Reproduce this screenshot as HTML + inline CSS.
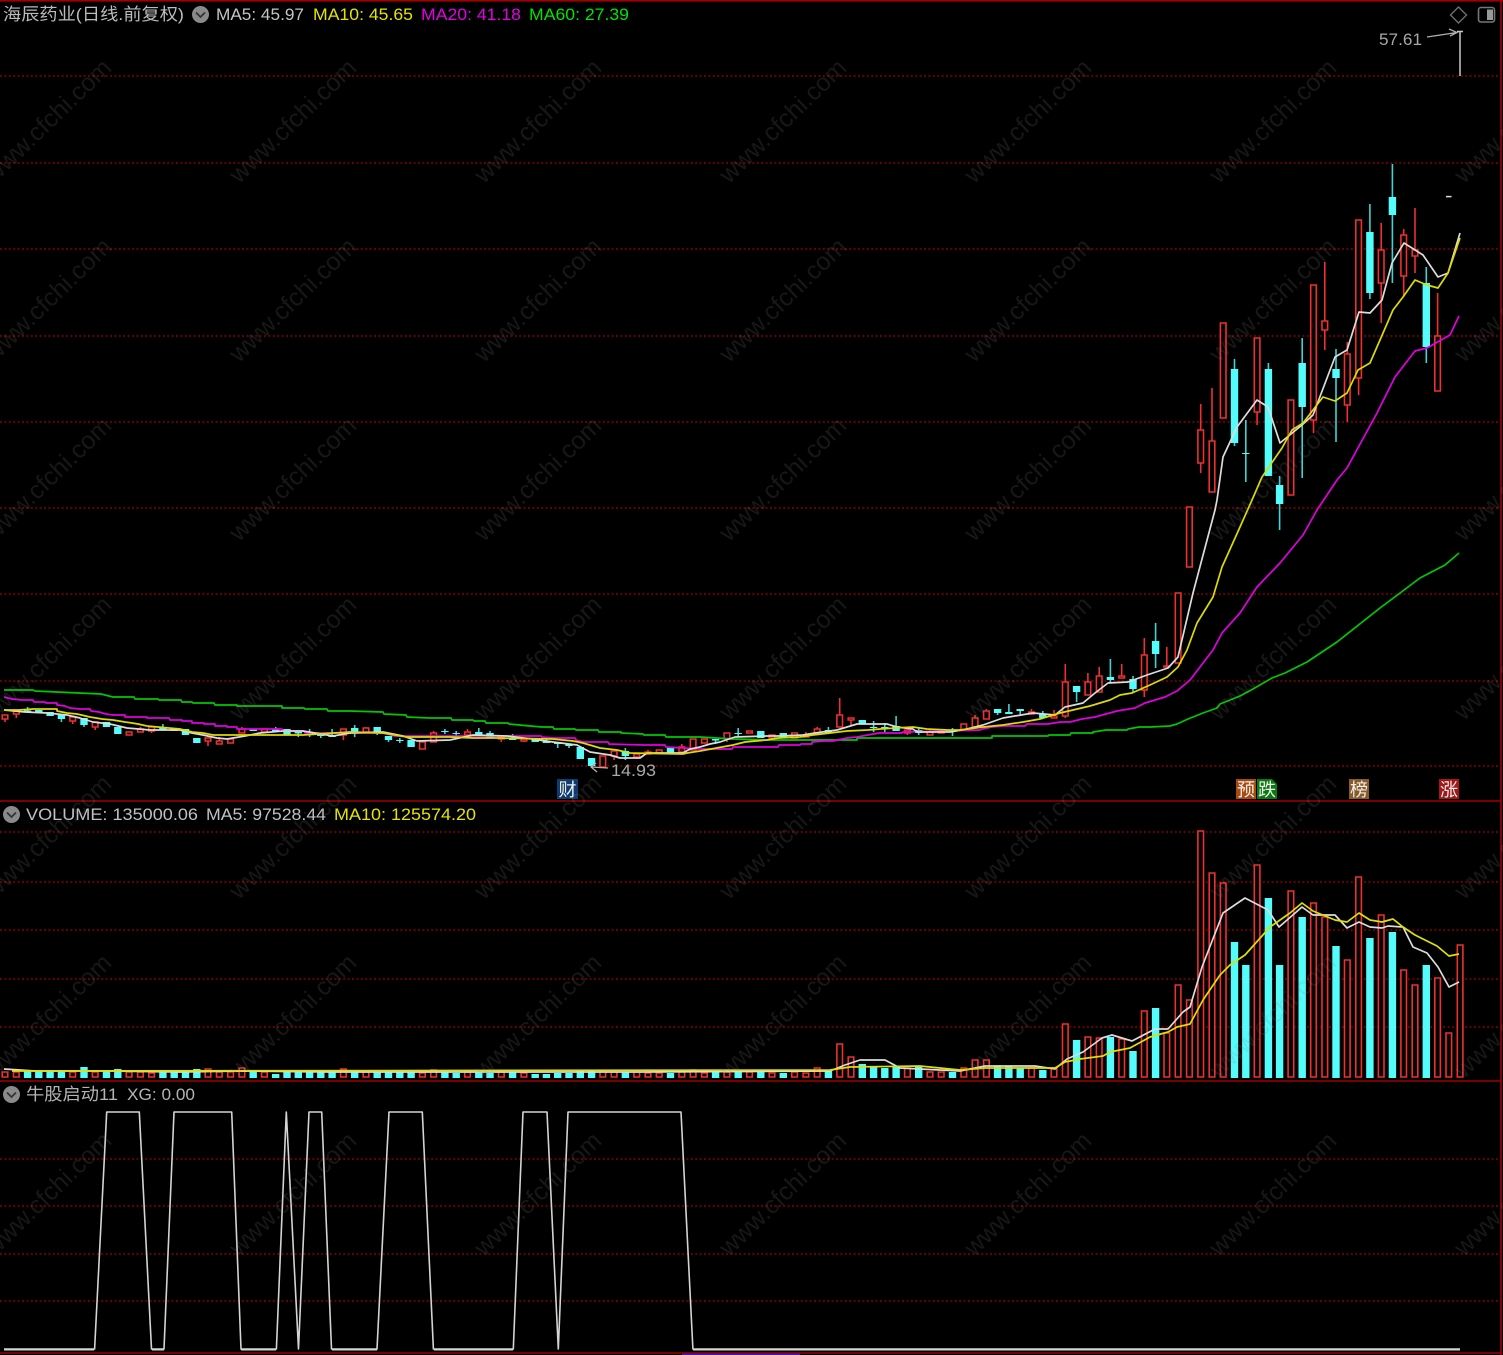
<!DOCTYPE html>
<html lang="zh">
<head>
<meta charset="utf-8">
<title>海辰药业</title>
<style>
html,body{margin:0;padding:0;background:#000;width:1503px;height:1355px;overflow:hidden}
svg{display:block;position:absolute;left:0;top:0}
text{font-family:"Liberation Sans","Noto Sans CJK SC",sans-serif}
.g{stroke:#860000;stroke-width:1.5;stroke-dasharray:2 2.4;fill:none}
.m{fill:none;stroke-width:1.7;stroke-linejoin:round}
.h{font-size:17px}
.w{font-size:25px;fill:#8a8a8a;fill-opacity:.17;text-anchor:middle}
.t{font-size:18px;fill:#eee;text-anchor:middle}
</style>
</head>
<body>
<svg width="1503" height="1355" viewBox="0 0 1503 1355" xmlns="http://www.w3.org/2000/svg">
<rect width="1503" height="1355" fill="#000"/>

<path class="g" d="M0 76H1500M0 163H1500M0 249H1500M0 336H1500M0 422H1500M0 508H1500M0 594H1500M0 681H1500M0 766H1500M0 832H1500M0 882H1500M0 930H1500M0 979H1500M0 1027H1500M0 1159H1500M0 1206H1500M0 1254H1500M0 1301H1500"/>

<path fill="none" stroke="#a00000" stroke-width="1.6" d="M0 .8H1503M0 801H1501M0 1081H1501M0 1353H1501M1501 0V1355"/>
<path fill="none" stroke="#3020c0" stroke-width="1.4" d="M682 1354.4H800"/>

<!-- Candles: red wicks -->
<path fill="none" stroke="#ee3030" stroke-width="1.6" d="M5 719V722M16.3 714V718M72.7 721V724M95.2 727V730M140.4 727V729M151.6 731V733M208 741V746M219.3 737V741M241.9 727V729M343.4 735V740M366 727V728M433.6 731V733M467.5 729V732M501.3 739V742M523.9 741V742M614.1 756V760M648 750V752M681.8 744V747M726.9 739V742M805.9 732V735M817.2 727V729M839.7 698V715M851 720V725M907.4 727V735M930 730V732M975.1 715V718M986.4 709V711M1031.5 709V712M1054 710V716M1065.3 664V682M1065.3 716V718M1087.9 673V682M1099.2 667V676M1121.7 664V676M1144.3 638V655M1144.3 690V697M1166.8 647V666M1200.7 404V430M1200.7 463V473M1212 388V441M1257.1 412V425M1313.5 420V433M1324.8 262V321M1324.8 330V350M1347.3 342V354M1347.3 405V422M1358.6 378V395M1381.2 223V250M1381.2 283V323M1403.7 229V235M1403.7 276V297M1415 208V250M1415 256V273M1437.6 293V336"/>
<!-- Candles: red bodies -->
<path fill="#000" stroke="#ee3030" stroke-width="1.6" d="M2.2 715h5.6V719h-5.6zM13.5 711h5.6V714h-5.6zM69.9 717h5.6V721h-5.6zM92.4 722h5.6V727h-5.6zM126.3 732h5.6V735h-5.6zM137.6 729h5.6V732h-5.6zM148.8 727h5.6V731h-5.6zM205.2 738h5.6V741h-5.6zM216.5 741h5.6V744h-5.6zM227.8 739h5.6V743h-5.6zM239.1 729h5.6V733h-5.6zM261.6 729h5.6V732h-5.6zM340.6 729h5.6V735h-5.6zM363.2 728h5.6V732h-5.6zM419.6 742h5.6V749h-5.6zM430.8 733h5.6V742h-5.6zM464.7 732h5.6V735h-5.6zM498.5 737h5.6V739h-5.6zM521.1 739h5.6V741h-5.6zM600 756h5.6V767h-5.6zM611.3 751h5.6V756h-5.6zM633.9 754h5.6V757h-5.6zM645.2 752h5.6V754h-5.6zM656.4 750h5.6V753h-5.6zM679 747h5.6V752h-5.6zM690.3 739h5.6V750h-5.6zM701.6 739h5.6V743h-5.6zM724.1 733h5.6V739h-5.6zM746.7 731h5.6V733h-5.6zM769.2 735h5.6V738h-5.6zM791.8 733h5.6V738h-5.6zM803.1 735h5.6V737h-5.6zM814.4 729h5.6V734h-5.6zM836.9 715h5.6V727h-5.6zM848.2 718h5.6V720h-5.6zM904.6 730h5.6V733h-5.6zM927.2 732h5.6V735h-5.6zM938.4 732h5.6V733h-5.6zM961 724h5.6V730h-5.6zM972.3 718h5.6V727h-5.6zM983.6 711h5.6V719h-5.6zM1028.7 712h5.6V714h-5.6zM1051.2 716h5.6V718h-5.6zM1062.5 682h5.6V716h-5.6zM1085.1 682h5.6V695h-5.6zM1096.4 676h5.6V692h-5.6zM1118.9 676h5.6V678h-5.6zM1141.5 655h5.6V690h-5.6zM1164 666h5.6V667h-5.6zM1175.3 593h5.6V663h-5.6zM1186.6 507h5.6V567h-5.6zM1197.9 430h5.6V463h-5.6zM1209.2 441h5.6V492h-5.6zM1220.4 323h5.6V418h-5.6zM1254.3 338h5.6V412h-5.6zM1288.1 400h5.6V495h-5.6zM1310.7 285h5.6V420h-5.6zM1322 321h5.6V330h-5.6zM1344.5 354h5.6V405h-5.6zM1355.8 220h5.6V378h-5.6zM1378.4 250h5.6V283h-5.6zM1400.9 235h5.6V276h-5.6zM1412.2 250h5.6V256h-5.6zM1434.8 336h5.6V391h-5.6z"/>
<!-- Candles: cyan wicks -->
<path fill="none" stroke="#3cd4d4" stroke-width="1.6" d="M27.6 707V712M61.4 719V722M84 725V727M162.9 724V727M275.7 727V729M298.3 733V737M309.6 729V737M320.8 736V738M332.1 729V735M354.7 725V737M377.2 732V735M388.5 740V742M399.8 738V743M444.9 729V734M456.2 731V736M478.8 728V732M490 731V733M512.6 734V738M546.4 738V741M557.7 744V748M569 746V748M625.4 748V760M715.6 740V744M738.2 728V737M828.4 727V730M873.6 721V732M884.8 723V732M896.1 716V726M918.7 728V735M952.5 728V736M997.6 713V715M1008.9 704V714M1020.2 711V716M1042.8 711V714M1076.6 692V702M1110.4 659V683M1133 676V692M1155.6 623V668M1234.5 359V446M1245.8 420V482M1268.4 363V369M1279.6 476V530M1302.2 338V478M1336 349V442M1369.9 204V299M1392.4 164V283M1426.3 267V363"/>
<!-- Candles: cyan bodies -->
<path fill="none" stroke="#54fcfc" stroke-width="7.4" d="M27.6 710.5V712M38.8 710V712M50.1 712V716M61.4 714V719M84 718V725M106.5 722V727M117.8 727V734M162.9 727V730M174.2 728V731M185.5 729V735M196.8 738V743M253.2 729V731M275.7 729V731M287 729V735M298.3 732V733.5M309.6 732V733M320.8 734V736M332.1 735V737M354.7 728V733M377.2 727V732M388.5 736V740M399.8 740V741M411.1 740V747M444.9 731V732M456.2 733V734M478.8 732V735M490 733V738M512.6 738V740M535.2 738V742M546.4 741V743M557.7 742V744M569 744V746M580.3 747V759M591.6 758V766M625.4 751V756M670.5 748V753M715.6 739V740.5M738.2 733V734M760.8 731V738M783.3 733V738M828.4 730V733M862.3 720V724M873.6 727V728M884.8 727V728M896.1 726V731M918.7 730V733M952.5 731V732M997.6 709V713M1008.9 712V714M1020.2 709V711M1042.8 714V718M1076.6 686V692M1110.4 677V680M1133 679V689M1155.6 641V654M1234.5 369V443M1245.8 453V454M1268.4 369V476M1279.6 485V504M1302.2 363V407M1336 369V378M1369.9 232V293M1392.4 197V215M1426.3 283V347"/>
<path fill="none" stroke="#ddd" stroke-width="1.5" d="M1446 196.6H1451.5"/>

<!-- High marker -->
<path fill="none" stroke="#c8c8c8" stroke-width="1.5" d="M1460 31V76M1457 31.5H1463"/>
<path fill="none" stroke="#b0b0b0" stroke-width="1.3" d="M1427 37L1457 32.5M1449 29L1457 32.5L1450 36"/>
<!-- Low marker -->
<path fill="none" stroke="#b0b0b0" stroke-width="1.3" d="M608 768L591 767M596 763L591 767L597 772"/>

<!-- Main MAs -->
<polyline class="m" stroke="#00c800" points="4,690 33,690 35,691 57,692 79,693 101,694 113,697 134,697 135,699 158,699 159,700 181,700 182,702 192,702 193,703 214,703 215,705 237,705 237,706 282,706 282,708 304,708 305,709 327,709 328,711 350,711 383,712 384,714 406,715 407,717 429,718 451,718 452,720 473,720 474,721 485,721 486,723 508,723 509,724 530,726 542,727 553,727 554,729 575,729 576,730 598,730 599,732 621,732 621,733 643,734 644,735 665,735 666,737 700,737 733,739 767,740 857,740 857,738 992,738 992,736 1048,736 1049,735 1070,735 1071,733 1093,733 1093,732 1106,730 1127,730 1128,729 1139,727 1150,727 1170,726 1177,724 1188,719 1203,713 1217,708 1220,704 1240,696 1253,689 1272,678 1285,673 1307,662 1337,642 1380,608 1420,578 1445,565 1459,553"/>
<polyline class="m" stroke="#e000e0" points="4,697 12,699 22,700 33,700 34,702 45,702 46,703 57,703 57,705 65,706 70,708 80,709 90,709 91,711 99,712 106,714 113,715 125,715 125,717 147,717 147,718 169,718 170,720 182,720 182,721 192,721 192,723 204,723 204,724 215,724 215,726 227,726 227,727 237,727 237,729 282,729 283,731 304,731 305,733 383,733 395,736 541,736 542,737 553,738 575,738 576,740 583,742 608,742 609,744 643,745 665,745 666,747 700,749 732,749 733,747 778,747 779,745 800,745 801,744 812,744 812,742 824,741 833,741 847,738 857,737 868,735 879,733 902,733 903,732 980,730 982,729 992,727 1003,726 1025,726 1027,724 1048,724 1060,722 1070,722 1082,719 1095,717 1117,711 1135,708 1145,703 1165,697 1177,691 1190,680 1213,650 1222,633 1240,613 1257,587 1280,563 1303,535 1317,510 1337,480 1347,468 1377,413 1395,377 1415,351 1427,348 1450,335 1459,316"/>
<polyline class="m" stroke="#dcdcdc" points="4,710 25,712 47,713 67,715 80,718 93,722 110,724 127,728 150,730 180,730 192,733 203,735 217,738 227,739 245,736 260,733 283,731 303,731 333,736 350,733 383,732 403,736 417,741 450,740 473,735 507,736 532,739 553,742 577,745 590,752 610,755 620,758 640,758 647,753 683,753 690,749 700,747 710,744 720,742 735,737 767,736 778,736 803,735 815,733 837,730 847,727 857,724 887,724 897,727 913,729 917,732 950,732 967,729 983,725 1003,718 1033,713 1055,715 1065,707 1083,703 1095,693 1108,683 1128,682 1147,675 1168,668 1178,657 1193,593 1215,510 1217,500 1223,457 1237,427 1257,400 1268,407 1280,443 1302,425 1313,415 1335,357 1347,350 1359,312 1370,313 1382,300 1392,263 1404,243 1423,255 1438,277 1448,273 1460,233"/>
<polyline class="m" stroke="#dcdc00" points="4,710 19,710 33,709 57,709 57,711 67,713 77,714 90,717 102,719 113,720 125,722 132,723 138,724 147,726 158,727 180,729 192,732 203,733 213,735 303,735 350,732 383,733 395,735 407,737 450,737 473,738 497,738 553,739 573,741 583,743 600,748 617,750 630,753 683,754 687,753 700,751 722,747 733,745 745,742 767,740 778,738 800,737 813,735 830,733 847,731 868,730 880,729 913,727 927,729 948,730 960,730 983,727 1003,725 1023,722 1040,719 1060,713 1073,710 1090,706 1110,700 1120,695 1132,693 1150,685 1167,677 1178,667 1187,650 1197,623 1213,597 1222,567 1240,527 1252,500 1262,477 1282,448 1292,430 1303,423 1323,397 1335,401 1347,393 1358,370 1370,363 1393,310 1403,297 1415,280 1427,285 1438,288 1448,273 1460,238"/>

<!-- Volume: red -->
<path fill="#000" stroke="#ee3030" stroke-width="1.6" d="M2.2 1072h5.6V1077h-5.6zM13.5 1072h5.6V1077h-5.6zM69.9 1072h5.6V1077h-5.6zM92.4 1072h5.6V1077h-5.6zM126.3 1072h5.6V1077h-5.6zM137.6 1072h5.6V1077h-5.6zM148.8 1073h5.6V1077h-5.6zM205.2 1069h5.6V1077h-5.6zM216.5 1072h5.6V1077h-5.6zM227.8 1072h5.6V1077h-5.6zM239.1 1068h5.6V1077h-5.6zM261.6 1072h5.6V1077h-5.6zM340.6 1069h5.6V1077h-5.6zM363.2 1072h5.6V1077h-5.6zM419.6 1073h5.6V1077h-5.6zM430.8 1070h5.6V1077h-5.6zM464.7 1072h5.6V1077h-5.6zM498.5 1072h5.6V1077h-5.6zM521.1 1073h5.6V1077h-5.6zM600 1071h5.6V1077h-5.6zM611.3 1072h5.6V1077h-5.6zM633.9 1072h5.6V1077h-5.6zM645.2 1073h5.6V1077h-5.6zM656.4 1073h5.6V1077h-5.6zM679 1072h5.6V1077h-5.6zM690.3 1070h5.6V1077h-5.6zM701.6 1073h5.6V1077h-5.6zM724.1 1072h5.6V1077h-5.6zM746.7 1072h5.6V1077h-5.6zM769.2 1073h5.6V1077h-5.6zM791.8 1072h5.6V1077h-5.6zM803.1 1073h5.6V1077h-5.6zM814.4 1068h5.6V1077h-5.6zM836.9 1044h5.6V1077h-5.6zM848.2 1057h5.6V1077h-5.6zM904.6 1068h5.6V1077h-5.6zM927.2 1072h5.6V1077h-5.6zM938.4 1072h5.6V1077h-5.6zM961 1068h5.6V1077h-5.6zM972.3 1060h5.6V1077h-5.6zM983.6 1060h5.6V1077h-5.6zM1028.7 1068h5.6V1077h-5.6zM1051.2 1068h5.6V1077h-5.6zM1062.5 1024h5.6V1077h-5.6zM1085.1 1037h5.6V1077h-5.6zM1096.4 1038h5.6V1077h-5.6zM1118.9 1039h5.6V1077h-5.6zM1141.5 1011h5.6V1077h-5.6zM1164 1033h5.6V1077h-5.6zM1175.3 985h5.6V1077h-5.6zM1186.6 1000h5.6V1077h-5.6zM1197.9 831h5.6V1077h-5.6zM1209.2 873h5.6V1077h-5.6zM1220.4 883h5.6V1077h-5.6zM1254.3 865h5.6V1077h-5.6zM1288.1 891h5.6V1077h-5.6zM1310.7 903h5.6V1077h-5.6zM1322 917h5.6V1077h-5.6zM1344.5 960h5.6V1077h-5.6zM1355.8 877h5.6V1077h-5.6zM1378.4 915h5.6V1077h-5.6zM1400.9 970h5.6V1077h-5.6zM1412.2 985h5.6V1077h-5.6zM1434.8 978h5.6V1077h-5.6zM1446 1033h5.6V1077h-5.6zM1457.3 945h5.6V1077h-5.6z"/>
<!-- Volume: cyan -->
<path fill="none" stroke="#54fcfc" stroke-width="7.4" d="M27.6 1071V1078M38.8 1071V1078M50.1 1071V1078M61.4 1071V1078M84 1067V1078M106.5 1071V1078M117.8 1069V1078M162.9 1071V1078M174.2 1072V1078M185.5 1071V1078M196.8 1069V1078M253.2 1071V1078M275.7 1074V1078M287 1071V1078M298.3 1072V1078M309.6 1072V1078M320.8 1072V1078M332.1 1071V1078M354.7 1070V1078M377.2 1072V1078M388.5 1072V1078M399.8 1072V1078M411.1 1072V1078M444.9 1072V1078M456.2 1073V1078M478.8 1072V1078M490 1073V1078M512.6 1072V1078M535.2 1074V1078M546.4 1074V1078M557.7 1073V1078M569 1073V1078M580.3 1071V1078M591.6 1071V1078M625.4 1072V1078M670.5 1073V1078M715.6 1072V1078M738.2 1072V1078M760.8 1072V1078M783.3 1073V1078M828.4 1070V1078M862.3 1064V1078M873.6 1067V1078M884.8 1068V1078M896.1 1066V1078M918.7 1067V1078M952.5 1072V1078M997.6 1066V1078M1008.9 1066V1078M1020.2 1068V1078M1042.8 1070V1078M1076.6 1040V1078M1110.4 1037V1078M1133 1051V1078M1155.6 1008V1078M1234.5 942V1078M1245.8 965V1078M1268.4 898V1078M1279.6 965V1078M1302.2 917V1078M1336 946V1078M1369.9 938V1078M1392.4 932V1078M1426.3 965V1078"/>
<!-- Volume MAs -->
<polyline class="m" stroke="#dcdcdc" points="4,1069 20,1070 35,1071 60,1071 110,1071 180,1072 240,1071 330,1072 430,1072 500,1072 640,1072 830,1071 845,1065 860,1060 885,1060 900,1068 960,1071 985,1066 1035,1066 1055,1069 1067,1059 1083,1052 1102,1038 1112,1035 1132,1041 1155,1029 1168,1029 1183,1012 1190,1007 1202,967 1223,913 1245,898 1268,910 1279,927 1302,907 1313,915 1335,915 1347,928 1359,922 1370,927 1382,928 1388,926 1403,927 1413,947 1427,953 1438,967 1449,987 1459,982"/>
<polyline class="m" stroke="#e0e000" points="12,1071 830,1070 850,1067 920,1066 960,1070 985,1068 1040,1068 1055,1068 1065,1062 1080,1059 1103,1056 1110,1052 1130,1048 1150,1037 1168,1032 1177,1027 1190,1024 1203,1000 1220,975 1230,965 1245,955 1270,927 1290,913 1302,903 1313,911 1335,920 1347,922 1359,913 1370,920 1382,922 1393,919 1403,927 1415,935 1437,946 1449,956 1459,954"/>

<!-- Indicator -->
<polyline fill="none" stroke="#d4d4d4" stroke-width="1.6" stroke-linejoin="round" points="4,1349 94.6,1349 106.7,1112 139.3,1112 151.5,1349 164,1349 174,1112 231.7,1112 241,1349 276.4,1349 286.3,1112 298.5,1349 309,1112 321.7,1112 331.5,1349 377,1349 389,1112 422.3,1112 433.4,1349 513.3,1349 523,1112 547,1112 558.3,1349 568,1112 681,1112 692.9,1349 1460,1349"/>
<path fill="none" stroke="#d4d4d4" stroke-width="1" d="M4 1350H94M152 1350H164M241 1350H276M332 1350H377M434 1350H513M693 1350H1460"/>

<!-- Tags -->
<rect x="557" y="779" width="21" height="20" fill="#0e3c70"/>
<text class="t" x="567.5" y="796">财</text>
<rect x="1236" y="779" width="20" height="20" fill="#a84a10"/>
<text class="t" x="1246" y="796">预</text>
<path d="M1257 779h15l5 5v15h-20z" fill="#0a7a10"/>
<text class="t" x="1267" y="796">跌</text>
<rect x="1349" y="779" width="20" height="20" fill="#8a5a28"/>
<text class="t" x="1359" y="796">榜</text>
<rect x="1439" y="779" width="20" height="20" fill="#a01818"/>
<text class="t" x="1449" y="796">涨</text>

<!-- Header texts -->
<text class="h" x="3" y="20" fill="#bcbcbc" textLength="181" lengthAdjust="spacingAndGlyphs">海辰药业(日线.前复权)</text>
<circle cx="200.5" cy="14.5" r="8.5" fill="#8a8a8a"/>
<path d="M196 12.5l4.5 4.5 4.5-4.5" fill="none" stroke="#333" stroke-width="1.8"/>
<text class="h" x="216" y="20" fill="#c4c4c4" textLength="88" lengthAdjust="spacingAndGlyphs">MA5: 45.97</text>
<text class="h" x="313" y="20" fill="#e4e400" textLength="100" lengthAdjust="spacingAndGlyphs">MA10: 45.65</text>
<text class="h" x="421" y="20" fill="#e400e4" textLength="100" lengthAdjust="spacingAndGlyphs">MA20: 41.18</text>
<text class="h" x="529" y="20" fill="#00e400" textLength="100" lengthAdjust="spacingAndGlyphs">MA60: 27.39</text>

<circle cx="11.5" cy="814.5" r="8.5" fill="#8a8a8a"/>
<path d="M7 812.5l4.5 4.5 4.5-4.5" fill="none" stroke="#333" stroke-width="1.8"/>
<text class="h" x="26" y="820" fill="#c0c0c0" textLength="172" lengthAdjust="spacingAndGlyphs">VOLUME: 135000.06</text>
<text class="h" x="206" y="820" fill="#c0c0c0" textLength="120" lengthAdjust="spacingAndGlyphs">MA5: 97528.44</text>
<text class="h" x="334" y="820" fill="#e4e400" textLength="142" lengthAdjust="spacingAndGlyphs">MA10: 125574.20</text>

<circle cx="11.5" cy="1094.5" r="8.5" fill="#8a8a8a"/>
<path d="M7 1092.5l4.5 4.5 4.5-4.5" fill="none" stroke="#333" stroke-width="1.8"/>
<text class="h" x="26" y="1100" fill="#b4b4b4" textLength="92" lengthAdjust="spacingAndGlyphs">牛股启动11</text>
<text class="h" x="127" y="1100" fill="#b4b4b4" textLength="68" lengthAdjust="spacingAndGlyphs">XG: 0.00</text>

<text class="h" x="1379" y="45" fill="#a8a8a8" textLength="43" lengthAdjust="spacingAndGlyphs">57.61</text>
<text class="h" x="611" y="776" fill="#a8a8a8" textLength="45" lengthAdjust="spacingAndGlyphs">14.93</text>

<!-- Window icons -->
<path d="M1458.5 7l8 8-8 8-8-8z" fill="none" stroke="#6e6e6e" stroke-width="1.4"/>
<rect x="1478.5" y="7.5" width="16" height="14.5" rx="2.5" fill="none" stroke="#777" stroke-width="1.6"/>
<rect x="1487" y="9.5" width="6" height="10.5" fill="#9a9a9a"/>

<!-- Watermark -->
<g class="w" transform="translate(3.5 3)">
<text transform="translate(50 124) rotate(-44)">www.cfchi.com</text>
<text transform="translate(295 124) rotate(-44)">www.cfchi.com</text>
<text transform="translate(540 124) rotate(-44)">www.cfchi.com</text>
<text transform="translate(785 124) rotate(-44)">www.cfchi.com</text>
<text transform="translate(1030 124) rotate(-44)">www.cfchi.com</text>
<text transform="translate(1275 124) rotate(-44)">www.cfchi.com</text>
<text transform="translate(1520 124) rotate(-44)">www.cfchi.com</text>
<text transform="translate(50 303) rotate(-44)">www.cfchi.com</text>
<text transform="translate(295 303) rotate(-44)">www.cfchi.com</text>
<text transform="translate(540 303) rotate(-44)">www.cfchi.com</text>
<text transform="translate(785 303) rotate(-44)">www.cfchi.com</text>
<text transform="translate(1030 303) rotate(-44)">www.cfchi.com</text>
<text transform="translate(1275 303) rotate(-44)">www.cfchi.com</text>
<text transform="translate(1520 303) rotate(-44)">www.cfchi.com</text>
<text transform="translate(50 482) rotate(-44)">www.cfchi.com</text>
<text transform="translate(295 482) rotate(-44)">www.cfchi.com</text>
<text transform="translate(540 482) rotate(-44)">www.cfchi.com</text>
<text transform="translate(785 482) rotate(-44)">www.cfchi.com</text>
<text transform="translate(1030 482) rotate(-44)">www.cfchi.com</text>
<text transform="translate(1275 482) rotate(-44)">www.cfchi.com</text>
<text transform="translate(1520 482) rotate(-44)">www.cfchi.com</text>
<text transform="translate(50 661) rotate(-44)">www.cfchi.com</text>
<text transform="translate(295 661) rotate(-44)">www.cfchi.com</text>
<text transform="translate(540 661) rotate(-44)">www.cfchi.com</text>
<text transform="translate(785 661) rotate(-44)">www.cfchi.com</text>
<text transform="translate(1030 661) rotate(-44)">www.cfchi.com</text>
<text transform="translate(1275 661) rotate(-44)">www.cfchi.com</text>
<text transform="translate(1520 661) rotate(-44)">www.cfchi.com</text>
<text transform="translate(50 840) rotate(-44)">www.cfchi.com</text>
<text transform="translate(295 840) rotate(-44)">www.cfchi.com</text>
<text transform="translate(540 840) rotate(-44)">www.cfchi.com</text>
<text transform="translate(785 840) rotate(-44)">www.cfchi.com</text>
<text transform="translate(1030 840) rotate(-44)">www.cfchi.com</text>
<text transform="translate(1275 840) rotate(-44)">www.cfchi.com</text>
<text transform="translate(1520 840) rotate(-44)">www.cfchi.com</text>
<text transform="translate(50 1019) rotate(-44)">www.cfchi.com</text>
<text transform="translate(295 1019) rotate(-44)">www.cfchi.com</text>
<text transform="translate(540 1019) rotate(-44)">www.cfchi.com</text>
<text transform="translate(785 1019) rotate(-44)">www.cfchi.com</text>
<text transform="translate(1030 1019) rotate(-44)">www.cfchi.com</text>
<text transform="translate(1275 1019) rotate(-44)">www.cfchi.com</text>
<text transform="translate(1520 1019) rotate(-44)">www.cfchi.com</text>
<text transform="translate(50 1197) rotate(-44)">www.cfchi.com</text>
<text transform="translate(295 1197) rotate(-44)">www.cfchi.com</text>
<text transform="translate(540 1197) rotate(-44)">www.cfchi.com</text>
<text transform="translate(785 1197) rotate(-44)">www.cfchi.com</text>
<text transform="translate(1030 1197) rotate(-44)">www.cfchi.com</text>
<text transform="translate(1275 1197) rotate(-44)">www.cfchi.com</text>
<text transform="translate(1520 1197) rotate(-44)">www.cfchi.com</text>
</g>
</svg>
</body>
</html>
